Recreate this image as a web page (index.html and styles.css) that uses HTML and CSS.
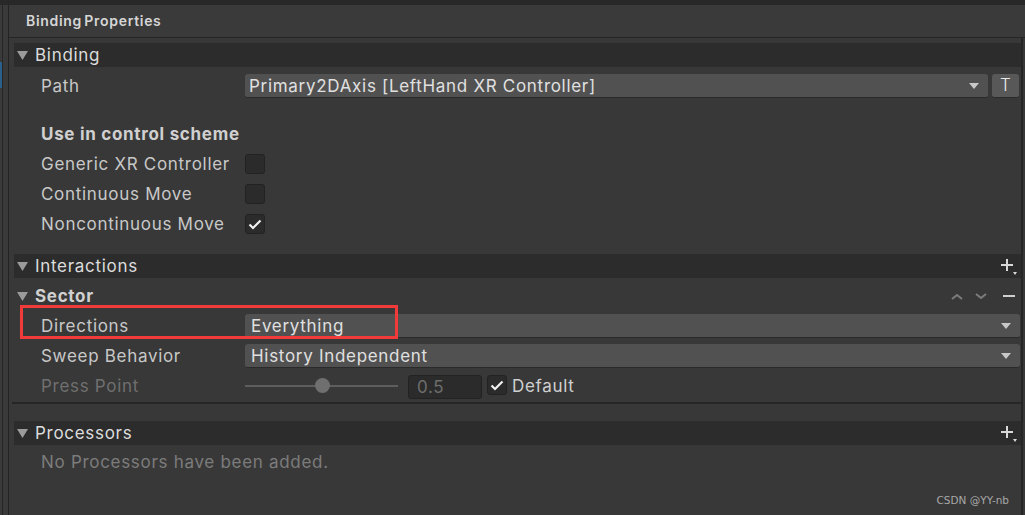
FILE: index.html
```html
<!DOCTYPE html>
<html lang="en">
<head>
  <meta charset="UTF-8" />
  <title>Binding Properties</title>
  <link rel="stylesheet" href="styles.css">
</head>
<body>
  <div class="app">
    <div class="side"><div class="side-sel"></div></div>

    <div class="main">
      <div class="title-bar">Binding Properties</div>

      <div class="panel">
        <!-- Binding -->
        <div class="fold-head">
          <svg class="tri" width="11" height="9" viewBox="0 0 11 9"><path d="M0 0h11L5.5 9z"/></svg>
          <span>Binding</span>
        </div>
        <div class="row row-path">
          <div class="label">Path</div>
          <div class="dropdown"><span>Primary2DAxis [LeftHand XR Controller]</span>
            <svg class="arr" width="10" height="6" viewBox="0 0 10 6"><path d="M0 0h10L5 6z"/></svg>
          </div>
          <div class="t-btn">T</div>
        </div>

        <div class="row row-scheme">
          <div class="label bold">Use in control scheme</div>
        </div>
        <div class="row">
          <div class="label">Generic XR Controller</div>
          <div class="check"></div>
        </div>
        <div class="row">
          <div class="label">Continuous Move</div>
          <div class="check"></div>
        </div>
        <div class="row">
          <div class="label">Noncontinuous Move</div>
          <div class="check"><svg width="14" height="11" viewBox="0 0 14 11"><path d="M1.5 5.5l3.5 3.5 7.5-7.5" fill="none" stroke="#f0f0f0" stroke-width="2.2"/></svg></div>
        </div>

        <!-- Interactions -->
        <div class="fold-head head-inter">
          <svg class="tri" width="11" height="9" viewBox="0 0 11 9"><path d="M0 0h11L5.5 9z"/></svg>
          <span>Interactions</span>
          <svg class="plus" width="18" height="18" viewBox="0 0 18 18"><path d="M7 1v12M1 7h12" stroke="#d8d8d8" stroke-width="2"/><path d="M13 14h4l-2 3z" fill="#d8d8d8"/></svg>
        </div>

        <div class="sub-head">
          <svg class="tri" width="11" height="9" viewBox="0 0 11 9"><path d="M0 0h11L5.5 9z"/></svg>
          <span class="bold">Sector</span>
          <div class="tools">
            <svg width="12" height="7" viewBox="0 0 12 7"><path d="M1 6l5-4 5 4" fill="none" stroke="#7c7c7c" stroke-width="2"/></svg>
            <svg width="12" height="7" viewBox="0 0 12 7"><path d="M1 1l5 4 5-4" fill="none" stroke="#7c7c7c" stroke-width="2"/></svg>
            <svg class="minus" width="12" height="2" viewBox="0 0 12 2"><path d="M0 1h12" stroke="#cfcfcf" stroke-width="2"/></svg>
          </div>
        </div>
        <div class="row">
          <div class="label">Directions</div>
          <div class="dropdown wide"><span>Everything</span>
            <svg class="arr" width="10" height="6" viewBox="0 0 10 6"><path d="M0 0h10L5 6z"/></svg>
          </div>
        </div>
        <div class="row">
          <div class="label">Sweep Behavior</div>
          <div class="dropdown wide"><span>History Independent</span>
            <svg class="arr" width="10" height="6" viewBox="0 0 10 6"><path d="M0 0h10L5 6z"/></svg>
          </div>
        </div>
        <div class="row">
          <div class="label dim">Press Point</div>
          <div class="slider"><div class="thumb"></div></div>
          <div class="num">0.5</div>
          <div class="check small-check"><svg width="14" height="11" viewBox="0 0 14 11"><path d="M1.5 5.5l3.5 3.5 7.5-7.5" fill="none" stroke="#f0f0f0" stroke-width="2.2"/></svg></div>
          <div class="check-label">Default</div>
        </div>
        <div class="sep"></div>

        <!-- Processors -->
        <div class="fold-head head-proc">
          <svg class="tri" width="11" height="9" viewBox="0 0 11 9"><path d="M0 0h11L5.5 9z"/></svg>
          <span>Processors</span>
          <svg class="plus" width="18" height="18" viewBox="0 0 18 18"><path d="M7 1v12M1 7h12" stroke="#d8d8d8" stroke-width="2"/><path d="M13 14h4l-2 3z" fill="#d8d8d8"/></svg>
        </div>
        <div class="row row-empty">
          <div class="label dim2">No Processors have been added.</div>
        </div>
      </div>
    </div>
  </div>

  <div class="highlight"></div>
  <div class="mark">CSDN @YY-nb</div>
</body>
</html>
```

FILE: styles.css
```css
body {
  margin: 0;
  background: #383838;
  font-family: Inter, "Noto Sans", sans-serif;
  font-size: 17px;
  letter-spacing: 0.7px;
  color: #c8c8c8;
  height: 515px;
  overflow: hidden;
}
.app {
  display: flex;
  height: 515px;
  border-top: 5px solid #282828;
  box-sizing: border-box;
}
.side {
  width: 6px;
  border-left: 2px solid #3a3a3a;
  border-right: 1px solid #232323;
  background: #3a3a3a;
  box-shadow: inset 1px 0 0 #262626;
  padding-top: 57px;
}
.side-sel {
  width: 2px;
  margin-left: -2px;
  height: 26px;
  background: #2b5f8c;
}
.main {
  flex: 1;
  display: flex;
  flex-direction: column;
}
.title-bar {
  height: 32px;
  line-height: 31px;
  padding-left: 17px;
  font-size: 14px;
  font-weight: 600;
  letter-spacing: 0.7px;
  word-spacing: -2px;
  color: #d6d6d6;
  border-bottom: 1px solid #262626;
  background: #3a3a3a;
}
.panel {
  flex: 1;
  margin-right: 2px;
  padding: 5px 0 0 5px;
  border-right: 2px solid #262626;
}
.fold-head {
  height: 24px;
  display: flex;
  align-items: center;
  background: #2c2c2c;
  color: #dcdcdc;
  padding-left: 3px;
}
.fold-head span, .sub-head span {
  margin-left: 7px;
}
.tri {
  fill: #9b9b9b;
  flex: none;
}
.plus {
  margin-left: auto;
  margin-right: 3px;
  margin-top: 2px;
}
.row {
  height: 30px;
  display: flex;
  align-items: center;
  padding-left: 27px;
}
.label {
  width: 204px;
  flex: none;
  white-space: nowrap;
}
.bold {
  font-weight: 700;
  color: #d0d0d0;
}
.dim {
  color: #6f6f6f;
}
.dim2 {
  color: #7c7c7c;
}
.row-path {
  margin-top: 4px;
}
.row-scheme {
  margin-top: 18px;
}
.dropdown {
  height: 24px;
  flex: 1;
  display: flex;
  align-items: center;
  justify-content: space-between;
  background: #515151;
  border-radius: 3px;
  border-bottom: 1px solid #2a2a2a;
  box-sizing: border-box;
  padding: 0 9px 0 4px;
  color: #e0e0e0;
}
.dropdown .arr {
  fill: #c8c8c8;
}
.dropdown.wide span {
  margin-left: 2px;
}
.wide {
  margin-right: 1px;
}
.t-btn {
  width: 27px;
  height: 24px;
  margin-left: 4px;
  margin-right: 2px;
  background: #585858;
  border-radius: 3px;
  border-bottom: 1px solid #2a2a2a;
  box-sizing: border-box;
  text-align: center;
  line-height: 23px;
  font-weight: 300;
  letter-spacing: 0;
  color: #e8e8e8;
}
.check {
  width: 20px;
  height: 20px;
  box-sizing: border-box;
  background: #2b2b2b;
  border: 1px solid #222;
  border-radius: 3px;
  display: flex;
  align-items: center;
  justify-content: center;
}
.head-inter {
  margin-top: 15px;
}
.sub-head {
  height: 30px;
  display: flex;
  align-items: center;
  padding-left: 3px;
  margin-top: 3px;
  color: #dcdcdc;
}
.tools {
  margin-left: auto;
  display: flex;
  align-items: center;
  gap: 12px;
  margin-right: 6px;
}
.tools .minus {
  margin-left: 4px;
}
.slider {
  width: 153px;
  height: 2px;
  background: #5e5e5e;
  position: relative;
  flex: none;
}
.thumb {
  position: absolute;
  left: 70px;
  top: -7px;
  width: 15px;
  height: 15px;
  border-radius: 50%;
  background: #6f6f6f;
}
.num {
  width: 74px;
  height: 24px;
  margin-left: 10px;
  box-sizing: border-box;
  background: #2b2b2b;
  border: 1px solid #222;
  border-radius: 3px;
  line-height: 22px;
  padding-left: 8px;
  color: #6e6e6e;
  margin-top: 2px;
}
.small-check {
  margin-left: 5px;
  margin-top: -2px;
}
.check-label {
  margin-left: 5px;
  color: #d0d0d0;
}
.sep {
  height: 2px;
  background: #262626;
  margin: 1px 0 0 -2px;
}
.head-proc {
  margin-top: 17px;
}
.row-empty {
  margin-top: 2px;
}
.highlight {
  position: absolute;
  left: 20px;
  top: 305px;
  width: 372px;
  height: 28px;
  border: 3px solid #f23a3a;
}
.mark {
  position: absolute;
  right: 16px;
  top: 494px;
  font-family: "DejaVu Sans", sans-serif;
  font-size: 10.5px;
  letter-spacing: 0;
  color: #a8a8a8;
}
```
